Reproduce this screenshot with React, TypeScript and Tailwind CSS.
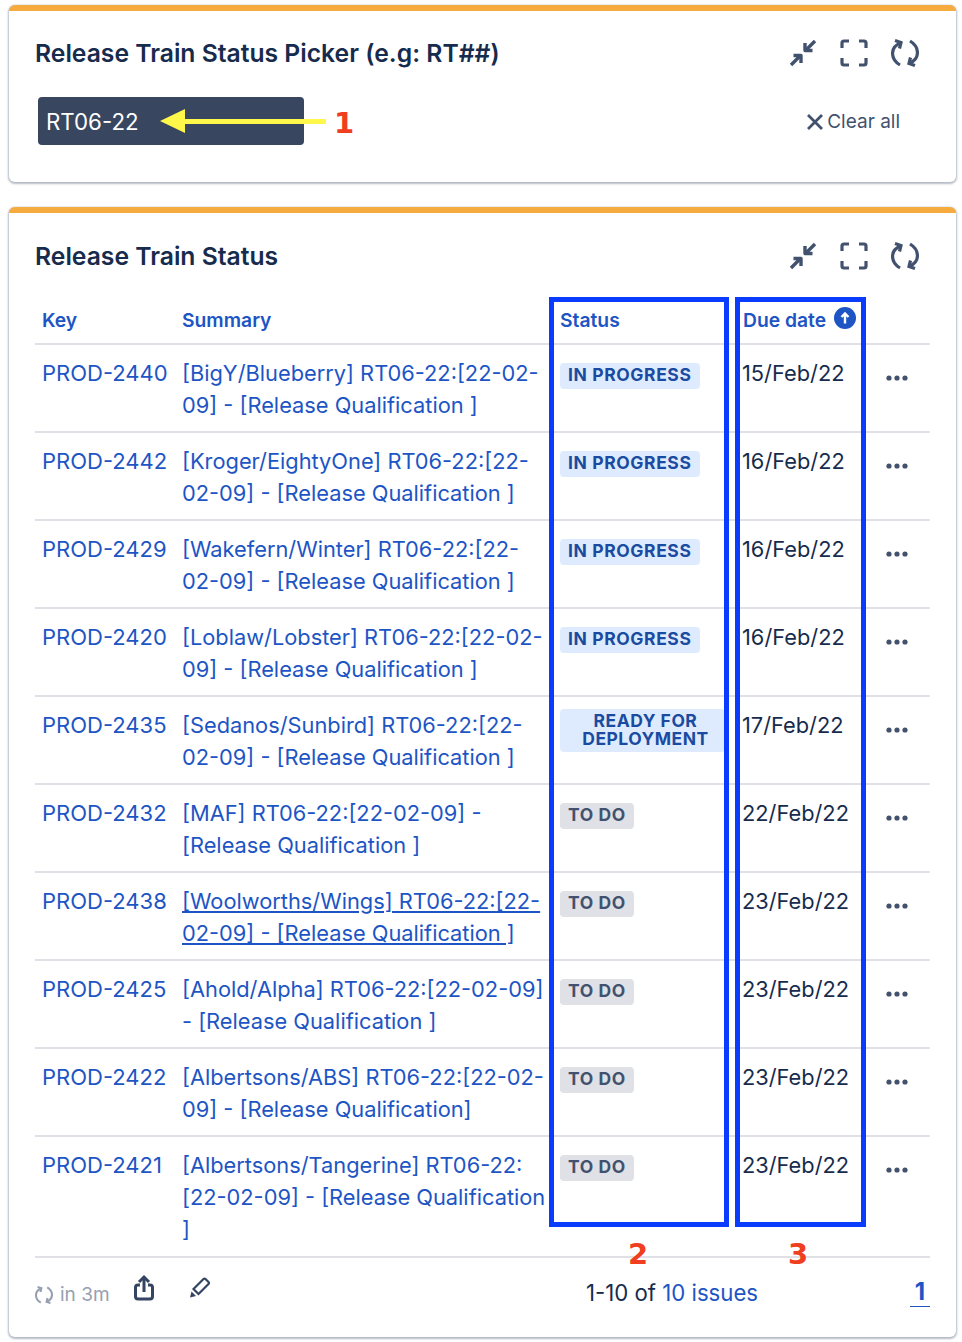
const rows = [
  { key: "PROD-2440", summary: "[BigY/Blueberry] RT06-22:[22-02-09] - [Release Qualification ]", status: "IN PROGRESS", due: "15/Feb/22" },
  { key: "PROD-2442", summary: "[Kroger/EightyOne] RT06-22:[22-02-09] - [Release Qualification ]", status: "IN PROGRESS", due: "16/Feb/22" },
  { key: "PROD-2429", summary: "[Wakefern/Winter] RT06-22:[22-02-09] - [Release Qualification ]", status: "IN PROGRESS", due: "16/Feb/22" },
  { key: "PROD-2420", summary: "[Loblaw/Lobster] RT06-22:[22-02-09] - [Release Qualification ]", status: "IN PROGRESS", due: "16/Feb/22" },
  { key: "PROD-2435", summary: "[Sedanos/Sunbird] RT06-22:[22-02-09] - [Release Qualification ]", status: "READY FOR DEPLOYMENT", due: "17/Feb/22" },
  { key: "PROD-2432", summary: "[MAF] RT06-22:[22-02-09] - [Release Qualification ]", status: "TO DO", due: "22/Feb/22" },
  { key: "PROD-2438", summary: "[Woolworths/Wings] RT06-22:[22-02-09] - [Release Qualification ]", status: "TO DO", due: "23/Feb/22", hovered: true },
  { key: "PROD-2425", summary: "[Ahold/Alpha] RT06-22:[22-02-09] - [Release Qualification ]", status: "TO DO", due: "23/Feb/22" },
  { key: "PROD-2422", summary: "[Albertsons/ABS] RT06-22:[22-02-09] - [Release Qualification]", status: "TO DO", due: "23/Feb/22" },
  { key: "PROD-2421", summary: "[Albertsons/Tangerine] RT06-22:[22-02-09] - [Release Qualification ]", status: "TO DO", due: "23/Feb/22", tall: true },
];

function ShrinkIcon() {
  return (
    <svg width="28" height="28" viewBox="0 0 28 28" fill="none" stroke="#42526E" strokeWidth="3.4" strokeLinejoin="round">
      <path d="M2 26l9-9" />
      <path d="M4.5 16.5H12V24" />
      <path d="M26 2l-9 9" />
      <path d="M23.5 11.5H16V4" />
    </svg>
  );
}

function FullscreenIcon() {
  return (
    <svg width="28" height="28" viewBox="0 0 28 28" fill="none" stroke="#42526E" strokeWidth="3.2">
      <path d="M2 9V4a2 2 0 0 1 2-2h5" />
      <path d="M19 2h5a2 2 0 0 1 2 2v5" />
      <path d="M26 19v5a2 2 0 0 1-2 2h-5" />
      <path d="M9 26H4a2 2 0 0 1-2-2v-5" />
    </svg>
  );
}

function RefreshIcon({ size = 28, color = "#42526E" }: { size?: number; color?: string }) {
  return (
    <svg width={size} height={size} viewBox="0 0 28 28" fill="none" stroke={color} strokeWidth="3.2">
      <path d="M9.5 4C-1 8 -1 20 9 26" />
      <path d="M18.5 24C29 20 29 8 19 2" />
      <path d="M4 1.5l6 2-1.5 6" />
      <path d="M24 26.5l-6-2 1.5-6" />
    </svg>
  );
}

function HeaderIcons() {
  return (
    <div className="flex items-center gap-[23px]">
      <ShrinkIcon />
      <FullscreenIcon />
      <RefreshIcon />
    </div>
  );
}

function Lozenge({ status }: { status: string }) {
  if (status === "TO DO") {
    return <span className="block w-fit h-[26px] px-[8px] rounded-[4px] bg-[#DFE1E6] text-[#42526E] text-[17.5px] leading-[24px] font-bold tracking-[0.6px]">{status}</span>;
  }
  if (status === "IN PROGRESS") {
    return <span className="block w-fit h-[26px] px-[8px] rounded-[4px] bg-[#DEEBFF] text-[#1B4BA0] text-[17.5px] leading-[24px] font-bold tracking-[0.6px]">{status}</span>;
  }
  return (
    <span className="block w-[165px] -mt-[6px] pl-[6px] pt-[3px] pb-[4px] rounded-[4px] bg-[#DEEBFF] text-[#1B4BA0] text-[17.5px] leading-[18px] font-bold tracking-[0.5px] text-center">
      READY FOR
      <br />
      DEPLOYMENT
    </span>
  );
}

export default function App() {
  return (
    <div className="relative w-[962px] h-[1342px] bg-white overflow-hidden text-[#172B4D]" style={{ fontFamily: "Inter, 'Noto Sans', sans-serif" }}>
      <div className="pt-[5px] pl-[9px] pr-[6px]">
        {/* Picker gadget */}
        <div className="h-[177px] rounded-[6px] border-t-[6px] border-[#F5AB3E] bg-white shadow-[0_1px_2px_1px_rgba(9,30,66,0.3)]">
          <div className="flex items-center justify-between pt-[28px] pl-[26px] pr-[37px]">
            <h2 className="text-[24.7px] leading-[28px] font-semibold">Release Train Status Picker (e.g: RT##)</h2>
            <HeaderIcons />
          </div>
          <div className="flex items-center justify-between mt-[30px] pl-[29px] pr-[56px]">
            <div className="w-[266px] h-[48px] pl-[8px] rounded-[4px] bg-[#38465F] text-white text-[22.3px] leading-[50px]">RT06-22</div>
            <div className="flex items-center gap-[2px] text-[19px] leading-[26px] text-[#42526E] pt-[1px]">
              <svg width="20" height="20" viewBox="0 0 20 20" fill="none" stroke="#42526E" strokeWidth="2.8">
                <path d="M3 3l14 14M17 3L3 17" />
              </svg>
              Clear all
            </div>
          </div>
        </div>

        {/* Issue table gadget */}
        <div className="mt-[25px] h-[1130px] rounded-[6px] border-t-[6px] border-[#F5AB3E] bg-white shadow-[0_1px_2px_1px_rgba(9,30,66,0.3)]">
          <div className="flex items-center justify-between pt-[28px] pl-[26px] pr-[37px]">
            <h2 className="text-[24.7px] leading-[30px] font-semibold">Release Train Status</h2>
            <HeaderIcons />
          </div>

          <div className="mt-[24px] ml-[26px] mr-[26px]">
            <div className="grid grid-cols-[140px_378px_182px_144px_51px] h-[50px] border-b-2 border-[#DFE1E6] text-[19.3px] leading-[24px] font-semibold text-[#1D55C4]">
              <div className="pl-[7px] pt-[13px]">Key</div>
              <div className="pl-[7px] pt-[13px]">Summary</div>
              <div className="pl-[7px] pt-[13px]">Status</div>
              <div className="pl-[8px] pt-[13px] flex gap-[8px] whitespace-nowrap">
                Due date
                <svg width="22" height="22" viewBox="0 0 22 22" className="-mt-[1px]">
                  <circle cx="11" cy="11" r="11" fill="#1D55C4" />
                  <path d="M11 16.5V7M7.5 10L11 6.5l3.5 3.5" fill="none" stroke="#fff" strokeWidth="2.4" />
                </svg>
              </div>
              <div />
            </div>

            {rows.map((r) => (
              <div
                key={r.key}
                className={`grid grid-cols-[140px_378px_182px_144px_51px] text-[21.8px] leading-[32px] border-b-2 border-[#DFE1E6] ${r.tall ? "h-[121px]" : "h-[88px]"}`}
              >
                <div className="pl-[7px] pt-[12px] text-[22px] text-[#1D55C4]">{r.key}</div>
                <div className={`pl-[7px] pt-[12px] text-[#1D55C4] ${r.hovered ? "underline" : ""}`}>{r.summary}</div>
                <div className="pl-[7px] pt-[18px]">
                  <Lozenge status={r.status} />
                </div>
                <div className="pl-[7px] pt-[12px]">{r.due}</div>
                <div className="pl-[7px] pt-[12px]">
                  <svg width="22" height="32" viewBox="0 0 22 32" fill="#42526E">
                    <circle cx="3" cy="21" r="2.6" />
                    <circle cx="11" cy="21" r="2.6" />
                    <circle cx="19" cy="21" r="2.6" />
                  </svg>
                </div>
              </div>
            ))}

            <div className="flex items-start justify-between pt-[17px]">
              <div className="flex items-start">
                <div className="flex items-center gap-[7px] mt-[8px] text-[19px] leading-[24px] text-[#97A0AF]">
                  <RefreshIcon size={18} color="#97A0AF" />
                  in 3m
                </div>
                <svg width="22" height="28" viewBox="0 0 22 28" fill="none" stroke="#344563" strokeWidth="3" className="ml-[23px] -mt-[1px]">
                  <path d="M7 11H5a2.5 2.5 0 0 0-2.5 2.5v9A2.5 2.5 0 0 0 5 25h12a2.5 2.5 0 0 0 2.5-2.5v-9A2.5 2.5 0 0 0 17 11h-2" />
                  <path d="M11 18V3" />
                  <path d="M6 8l5-5 5 5" />
                </svg>
                <svg width="24" height="24" viewBox="0 0 24 24" fill="none" stroke="#344563" strokeWidth="2.2" className="ml-[33px]">
                  <path d="M5.5 14L15.5 4Q16.5 3 17.5 4L20.5 7Q21.5 8 20.5 9L10.5 19Z" />
                  <path d="M3.5 16.5l4.5 4.5-6 1.5z" fill="#344563" stroke="none" />
                </svg>
              </div>
              <div className="absolute left-[586px] top-[1278px] text-[22.2px] leading-[30px]">
                1-10 of <span className="text-[#1D55C4]">10 issues</span>
              </div>
              <div className="w-[20px] h-[32px] text-center border-b border-[#1D55C4] text-[24px] leading-[34px] font-bold text-[#1D55C4]">1</div>
            </div>
          </div>
        </div>
      </div>

      {/* Screenshot annotations */}
      <svg width="170" height="28" viewBox="0 0 170 28" className="absolute left-[160px] top-[107px]" fill="#FFF84A">
        <path d="M0 14L25 2V12H166V17H25V26Z" />
      </svg>
      <div className="absolute left-[334px] top-[105px] text-[29px] leading-[36px] font-bold text-[#F03E20]" style={{ fontFamily: "'DejaVu Sans', sans-serif" }}>1</div>
      <div className="absolute left-[549px] top-[297px] w-[180px] h-[930px] border-[5px] border-[#0A3CFF]" />
      <div className="absolute left-[735px] top-[297px] w-[131px] h-[930px] border-[5px] border-[#0A3CFF]" />
      <div className="absolute left-[628px] top-[1236px] text-[29px] leading-[36px] font-bold text-[#F03E20]" style={{ fontFamily: "'DejaVu Sans', sans-serif" }}>2</div>
      <div className="absolute left-[788px] top-[1236px] text-[29px] leading-[36px] font-bold text-[#F03E20]" style={{ fontFamily: "'DejaVu Sans', sans-serif" }}>3</div>
    </div>
  );
}
